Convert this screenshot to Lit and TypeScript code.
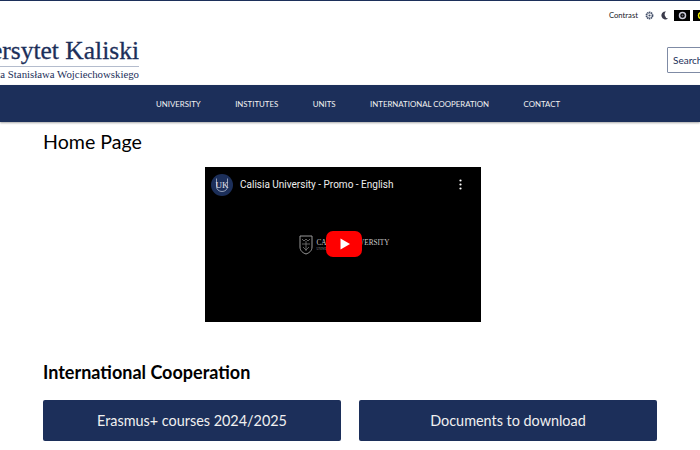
import { LitElement, html, css } from "lit";
import { customElement } from "lit/decorators.js";

@customElement("app-root")
export class AppRoot extends LitElement {
  static styles = css`
    :host { display: block; width: 700px; height: 450px; overflow: hidden; background: #fff; font-family: "Lato", "Liberation Sans", sans-serif; color: #000; }
    .page { border-top: 1px solid #1c2f5a; }
    .top { display: flex; justify-content: flex-end; align-items: center; height: 28px; box-sizing: border-box; overflow: hidden; }
    .contrast { font-size: 7.7px; color: #1a1a2a; margin-right: 7px; }
    .ic { display: block; flex: none; }
    .gear { margin-right: 7px; }
    .moon { margin-right: 5px; }
    .box { flex: none; width: 16px; height: 11px; background: #000; display: flex; align-items: center; justify-content: center; margin-right: 3px; }
    .box.last { margin-right: -9px; }
    .head { display: flex; justify-content: space-between; align-items: flex-start; height: 56px; overflow: hidden; }
    .logo { width: 139px; flex: none; overflow: hidden; display: flex; justify-content: flex-end; padding-top: 8px; }
    .logo-in { flex: none; color: #1c2f5a; font-family: "Liberation Serif", serif; text-align: right; white-space: nowrap; }
    .name { font-size: 25.5px; line-height: 28px; -webkit-text-stroke: 0.3px #1c2f5a; }
    .sub { border-top: 1px solid #b4bccd; font-size: 10.8px; line-height: 14px; margin-top: 1px; color: #1c2f5a; }
    .search { flex: none; width: 90px; height: 26px; margin-top: 18px; margin-right: -57px; box-sizing: border-box; border: 1px solid #7f8ba5; border-radius: 1px; font-size: 10px; color: #1c2f5a; display: flex; align-items: center; padding-left: 5px; }
    nav { background: #1c2f5a; height: 37px; padding-left: 16px; display: flex; justify-content: center; align-items: center; gap: 34.5px; box-shadow: 0 1px 2px rgba(0,0,0,.35); font-size: 7.85px; color: #f2f2f2; }
    main { padding: 0 43px; }
    h1 { font-size: 19.6px; font-weight: 400; line-height: 26px; margin: 7px 0 0; }
    .video { width: 276px; height: 155px; margin: 12px 0 0 162px; background: #000; position: relative; }
    .vhead { display: flex; align-items: center; height: 35px; padding: 0 19px 0 6px; color: #eee; font-family: "Roboto", sans-serif; font-size: 10px; gap: 7px; }
    .avatar { flex: none; }
    .vtitle { flex: 1; }
    .vcenter { position: absolute; inset: 0; display: flex; align-items: center; justify-content: center; color: #ccc; font-family: "Liberation Serif", serif; font-size: 7.2px; gap: 4px; padding-left: 2px; }
    .play { position: absolute; left: 121px; top: 64px; display: block; }
    .vt { padding-top: 1px; }
    .vt small { display: block; font-size: 3px; color: #888; }
    h2 { font-size: 18px; font-weight: 700; line-height: 22px; margin: 39px 0 0; }
    .btns { display: flex; gap: 18px; margin-top: 17px; }
    .btn { flex: none; width: 298px; height: 41px; background: #1c2f5a; border-radius: 2px; color: #f0f0f0; display: flex; align-items: center; justify-content: center; font-size: 14.4px; }
  `;

  render() {
    return html`
      <div class="page">
        <div class="top">
          <span class="contrast">Contrast</span>
          <svg class="ic gear" width="9" height="9" viewBox="0 0 9 9"><circle cx="4.5" cy="4.5" r="3" fill="none" stroke="#44506a" stroke-width="1.8" stroke-dasharray="1.4 .5"/><circle cx="4.5" cy="4.5" r="1.1" fill="#44506a"/></svg>
          <svg class="ic moon" width="8" height="9" viewBox="0 0 8 9"><path d="M5 .5A4 4 0 1 0 7 7.500 4 4 0 0 1 3.800 4.500 4 4 0 0 1 5 .5z" fill="#3a3a4a"/></svg>
          <span class="box"><svg width="11" height="9" viewBox="0 0 11 9"><circle cx="5.500" cy="4.500" r="3" fill="none" stroke="#ccd" stroke-width="1.500"/><circle cx="5.500" cy="4.500" r="1" fill="#667"/></svg></span>
          <span class="box last"><svg width="11" height="9" viewBox="0 0 11 9"><circle cx="5.500" cy="4.500" r="3" fill="none" stroke="#ee0" stroke-width="1.500"/><circle cx="5.500" cy="4.500" r="1" fill="#660"/></svg></span>
        </div>
        <div class="head">
          <div class="logo"><div class="logo-in">
            <div class="name">Uniwersytet Kaliski</div>
            <div class="sub">im. Prezydenta Stanisława Wojciechowskiego</div>
          </div></div>
          <div class="search">Search</div>
        </div>
        <nav><span>UNIVERSITY</span><span>INSTITUTES</span><span>UNITS</span><span>INTERNATIONAL COOPERATION</span><span>CONTACT</span></nav>
        <main>
          <h1>Home Page</h1>
          <div class="video">
            <div class="vcenter">
              <svg width="14" height="20" viewBox="0 0 14 20"><path d="M1 1h12v11c0 4-3 6-6 7-3-1-6-3-6-7z" fill="none" stroke="#999" stroke-width="1"/><path d="M3 4l2 2 2-2 2 2 2-2M3 9h8M4 12l3 3 3-3M7 6v10" fill="none" stroke="#777" stroke-width=".8"/></svg>
              <span class="vt">CALISIA UNIVERSITY<small>UNIWERSYTET KALISKI</small></span>
            </div>
            <div class="vhead">
              <svg class="avatar" width="22" height="22" viewBox="0 0 22 22"><circle cx="11" cy="11" r="11" fill="#1c2f5a"/><path d="M5.500 4.500v8c0 3 2.500 5 5.500 5s5.500-2 5.500-5v-8" fill="none" stroke="#c8cede" stroke-width=".7"/><text x="11" y="14" text-anchor="middle" font-size="9" font-family="Liberation Serif" fill="#e4e6ee">UK</text></svg>
              <span class="vtitle">Calisia University - Promo - English</span>
              <svg width="3" height="11" viewBox="0 0 3 11"><circle cx="1.5" cy="1.5" r="1.1" fill="#fff"/><circle cx="1.5" cy="5.5" r="1.1" fill="#fff"/><circle cx="1.5" cy="9.5" r="1.1" fill="#fff"/></svg>
            </div>
            <svg class="play" width="36" height="26" viewBox="0 0 36 26"><rect width="36" height="26" rx="7" fill="#f00"/><path d="M14.500 7.500l9.500 5.500-9.500 5.500z" fill="#fff"/></svg>
          </div>
          <h2>International Cooperation</h2>
          <div class="btns"><div class="btn">Erasmus+ courses 2024/2025</div><div class="btn">Documents to download</div></div>
        </main>
      </div>
    `;
  }
}
